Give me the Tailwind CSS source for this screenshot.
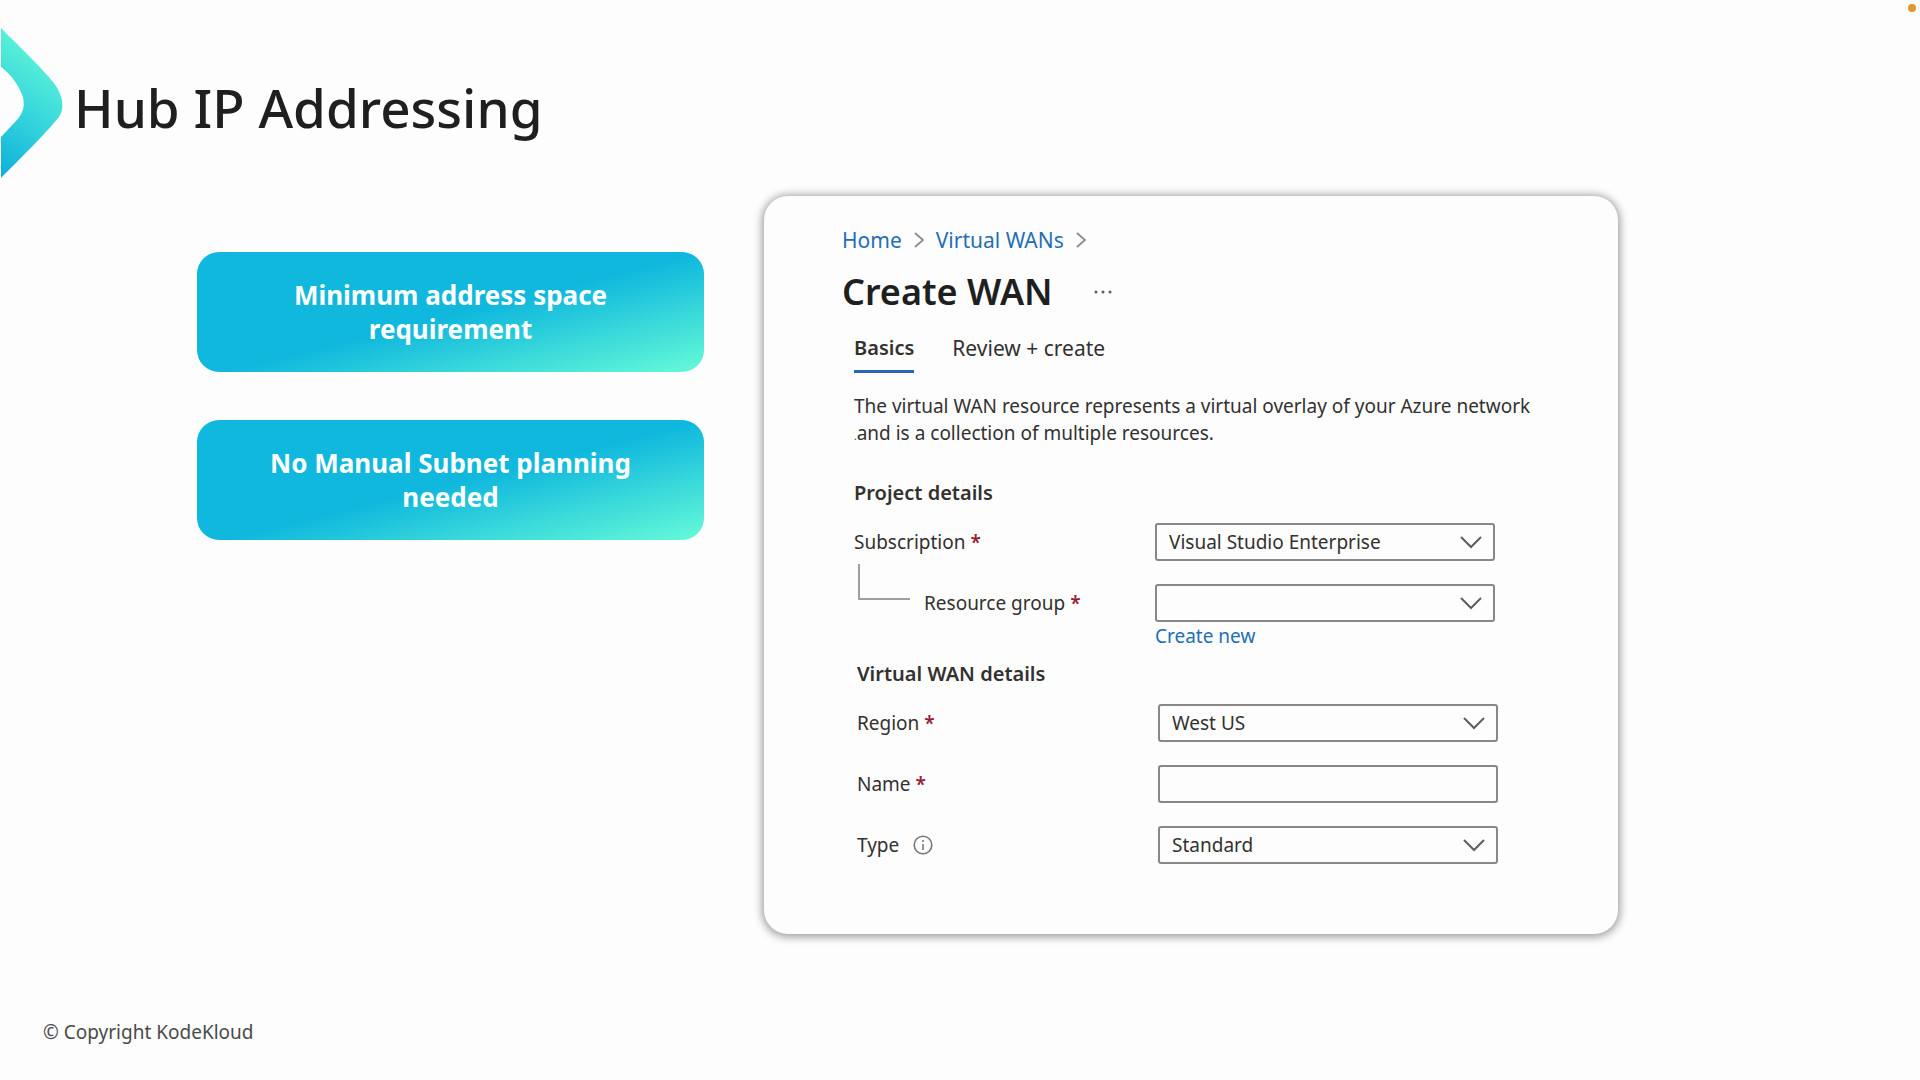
<!DOCTYPE html>
<html lang="en">
<head>
<meta charset="utf-8">
<meta name="viewport" content="width=device-width, initial-scale=1">
<title>Hub IP Addressing</title>
<script src="https://cdn.jsdelivr.net/npm/@tailwindcss/browser@4"></script>
</head>
<body class="relative flex min-h-screen flex-col bg-[#fdfdfd] font-['Noto_Sans',sans-serif] text-[#1f1f1f]">
  <span class="absolute top-1 right-1 size-2 rounded-full bg-[#e3962c]" aria-hidden="true"></span>

  <header class="flex h-49 items-start gap-2.5 pt-7">
    <svg class="h-[150px] w-16 shrink-0" viewBox="0 0 64 150" aria-hidden="true">
      <defs>
        <linearGradient id="arrow" x1="0.4" y1="0" x2="0.1" y2="1">
          <stop offset="0" stop-color="#62f8d8"/>
          <stop offset="0.55" stop-color="#33d3dc"/>
          <stop offset="1" stop-color="#10b0db"/>
        </linearGradient>
      </defs>
      <path fill="url(#arrow)" d="M1 0C14 13 40 38 54 55C63 68 65 79 59 89C48 103 20 131 1 150V109L16 93C25 84 26 73 20 62C15 52 10 46 1 39Z"/>
    </svg>
    <h1 class="pt-10 text-[53px] leading-[80px] font-medium">Hub IP Addressing</h1>
  </header>

  <main class="grid flex-1 grid-cols-[minmax(0,507fr)_minmax(0,854fr)] items-start gap-[60px] pr-[302px] pl-[197px]">
    <ul class="mt-14 flex flex-col gap-12 text-center text-[26px] leading-[34px] font-bold text-white">
      <li class="flex h-[120px] items-center justify-center rounded-[22px] bg-linear-[166deg,#10b8dd_0%,#10b8dd_52%,#62f8d8_98%] px-14">Minimum address space requirement</li>
      <li class="flex h-[120px] items-center justify-center rounded-[22px] bg-linear-[166deg,#10b8dd_0%,#10b8dd_52%,#62f8d8_98%] px-14">No Manual Subnet planning needed</li>
    </ul>

    <section class="rounded-3xl px-[78px] pt-[30px] pb-[70px] text-[19px] leading-[28px] text-[#323130] shadow-[0_1px_9px_2px_rgba(0,0,0,0.38)]">
      <nav class="flex items-center gap-3 text-[21px] text-[#1f6fb5]" aria-label="Breadcrumb">
        <a href="#">Home</a>
        <svg class="h-4 w-2.5" viewBox="0 0 10 16" fill="none" stroke="#8a8886" stroke-width="1.7" aria-hidden="true"><path d="M1 1l8 7-8 7"/></svg>
        <a href="#">Virtual WANs</a>
        <svg class="h-4 w-2.5" viewBox="0 0 10 16" fill="none" stroke="#8a8886" stroke-width="1.7" aria-hidden="true"><path d="M1 1l8 7-8 7"/></svg>
      </nav>

      <div class="mt-4 flex items-center gap-10">
        <h2 class="text-[36px] leading-[44px] font-semibold text-[#1f1f1f]">Create WAN</h2>
        <button type="button" aria-label="More actions">
          <svg class="h-4 w-5" viewBox="0 0 20 16" fill="#605e5c" aria-hidden="true"><circle cx="3" cy="8" r="1.5"/><circle cx="10" cy="8" r="1.5"/><circle cx="17" cy="8" r="1.5"/></svg>
        </button>
      </div>

      <form class="ml-3">
        <div class="mt-5 flex gap-[38px] text-[21px]" role="tablist">
          <button type="button" role="tab" aria-selected="true" class="border-b-3 border-[#2a66b8] pb-2 text-[20px] font-semibold">Basics</button>
          <button type="button" role="tab" aria-selected="false" class="border-b-3 border-transparent pb-2">Review + create</button>
        </div>

        <p class="mt-5 leading-[27px] whitespace-nowrap">The virtual WAN resource represents a virtual overlay of your Azure network<br><span class="text-[10px] leading-none">.</span>and is a collection of multiple resources.</p>

        <fieldset class="mt-8">
          <legend class="text-[20px] font-semibold">Project details</legend>
          <div class="mt-4 grid grid-cols-[301px_340px] gap-y-[23px]">
            <label for="subscription" class="leading-[38px]">Subscription <span class="font-semibold text-[#961c36]">*</span></label>
            <div class="relative">
              <select id="subscription" class="block h-[38px] w-full appearance-none rounded-[3px] border-2 border-[#8a8886] pl-3"><option>Visual Studio Enterprise</option></select>
              <svg class="pointer-events-none absolute top-3 right-3 h-3.5 w-6" viewBox="0 0 24 14" fill="none" stroke="#605e5c" stroke-width="2" aria-hidden="true"><path d="M2 2l10 10L22 2"/></svg>
            </div>
            <div class="flex h-[38px] gap-3.5 pl-1">
              <span class="-mt-5 h-9 w-[52px] border-b-2 border-l-2 border-[#a19f9d]" aria-hidden="true"></span>
              <label for="group" class="leading-[38px]">Resource group <span class="font-semibold text-[#961c36]">*</span></label>
            </div>
            <div class="relative">
              <select id="group" class="block h-[38px] w-full appearance-none rounded-[3px] border-2 border-[#8a8886] pl-3"><option></option></select>
              <svg class="pointer-events-none absolute top-3 right-3 h-3.5 w-6" viewBox="0 0 24 14" fill="none" stroke="#605e5c" stroke-width="2" aria-hidden="true"><path d="M2 2l10 10L22 2"/></svg>
              <a href="#" class="block text-[#1f6fb5]">Create new</a>
            </div>
          </div>
        </fieldset>

        <fieldset class="mt-2.5 ml-[3px]">
          <legend class="text-[20px] font-semibold">Virtual WAN details</legend>
          <div class="mt-4 grid grid-cols-[301px_340px] gap-y-[23px]">
            <label for="region" class="leading-[38px]">Region <span class="font-semibold text-[#961c36]">*</span></label>
            <div class="relative">
              <select id="region" class="block h-[38px] w-full appearance-none rounded-[3px] border-2 border-[#8a8886] pl-3"><option>West US</option></select>
              <svg class="pointer-events-none absolute top-3 right-3 h-3.5 w-6" viewBox="0 0 24 14" fill="none" stroke="#605e5c" stroke-width="2" aria-hidden="true"><path d="M2 2l10 10L22 2"/></svg>
            </div>
            <label for="name" class="leading-[38px]">Name <span class="font-semibold text-[#961c36]">*</span></label>
            <input id="name" type="text" class="h-[38px] w-full rounded-[3px] border-2 border-[#8a8886] px-3">
            <label for="type" class="flex items-center gap-3.5 leading-[38px]">Type
              <svg class="size-5" viewBox="0 0 20 20" fill="none" stroke="#797775" stroke-width="1.6" aria-hidden="true"><circle cx="10" cy="10" r="8.8"/><path d="M10 9v6M10 5v2"/></svg>
            </label>
            <div class="relative">
              <select id="type" class="block h-[38px] w-full appearance-none rounded-[3px] border-2 border-[#8a8886] pl-3"><option>Standard</option></select>
              <svg class="pointer-events-none absolute top-3 right-3 h-3.5 w-6" viewBox="0 0 24 14" fill="none" stroke="#605e5c" stroke-width="2" aria-hidden="true"><path d="M2 2l10 10L22 2"/></svg>
            </div>
          </div>
        </fieldset>
      </form>
    </section>
  </main>

  <footer class="px-[43px] pb-[34px] text-[19px] leading-[28px] text-[#4a4a4a]">© Copyright KodeKloud</footer>
</body>
</html>
